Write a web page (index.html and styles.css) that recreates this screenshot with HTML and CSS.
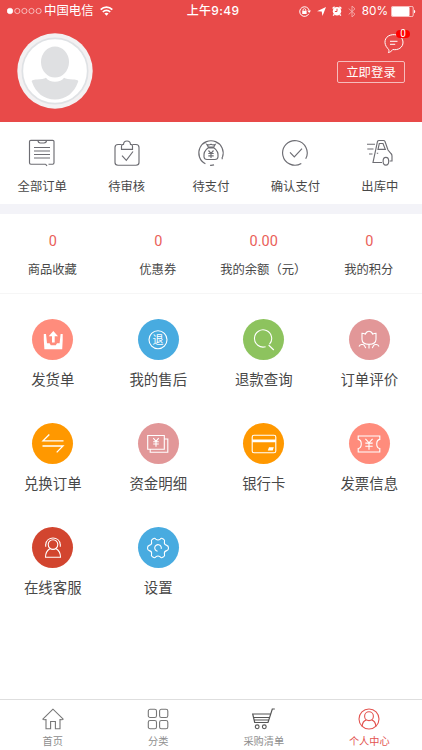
FILE: index.html
```html
<!DOCTYPE html>
<html lang="zh-CN">
<head>
    <meta charset="UTF-8">
    <meta name="viewport" content="width=device-width, initial-scale=1.0">
    <title>个人中心</title>
    <link rel="stylesheet" href="styles.css">
</head>
<body>
    <header class="header">
        <div class="status-bar">
            <div class="status-left">
                <svg width="36" height="8" viewBox="0 0 36 8" fill="none" stroke="#fff" stroke-width=".6">
                    <circle cx="3" cy="4" r="2.8" fill="#fff"/>
                    <circle cx="10.3" cy="4" r="2.6"/>
                    <circle cx="17.4" cy="4" r="2.6"/>
                    <circle cx="24.5" cy="4" r="2.6"/>
                    <circle cx="31.6" cy="4" r="2.6"/>
                </svg>
                <span class="carrier">中国电信</span>
                <svg width="13" height="10" viewBox="0 0 13 10" fill="none" stroke="#fff" stroke-width="1.7">
                    <path d="M.7 3.6C4 .2 9 .2 12.3 3.6M2.8 6C5 3.8 8 3.8 10.2 6"/>
                    <path d="M4.4 7.5C5.6 6.5 7.4 6.5 8.6 7.5L6.5 9.7Z" fill="#fff" stroke="none"/>
                </svg>
            </div>
            <div class="status-time">上午9:49</div>
            <div class="status-right">
                <svg class="status-lock" width="12" height="11" viewBox="0 0 12 11" fill="none" stroke="#fff">
                    <path d="M9.8 7.8A4.8 4.8 0 1 1 10.2 4.4"/>
                    <path d="M8.3 4.6H12L10.2 7Z" fill="#fff" stroke="none"/>
                    <rect x="3.2" y="4.8" width="4.4" height="3.2" fill="#fff" stroke="none"/>
                    <path d="M4 5V4C4 2.2 6.8 2.2 6.8 4V5" stroke-width=".8"/>
                </svg>
                <svg class="status-location" width="9" height="9" viewBox="0 0 9 9">
                    <path d="M9 0L5.5 9L4.7 4.5L0 4.3Z" fill="#fff"/>
                </svg>
                <svg class="status-alarm" width="10" height="10" viewBox="0 0 10 10">
                    <circle cx="5" cy="5.3" r="4.2" fill="#fff"/>
                    <path d="M.6 2.6L2.6.8M9.4 2.6L7.4.8M2 8.5L1.2 9.6M8 8.5L8.8 9.6" stroke="#fff" stroke-width="1.4"/>
                    <path d="M5 2.7V5.5H2.9" fill="none" stroke="#e84a49"/>
                </svg>
                <svg class="status-bluetooth" width="8" height="13" viewBox="0 0 8 13" fill="none" stroke="#fff" stroke-width=".9" opacity=".55">
                    <path d="M.7 3.6L7 9.2L4 12V1L7 3.8L.7 9.4"/>
                </svg>
                <span class="battery-text">80%</span>
                <svg width="25" height="11" viewBox="0 0 25 11">
                    <rect x=".4" y=".4" width="21.8" height="10.2" rx="1.4" fill="none" stroke="#fff" stroke-width=".7"/>
                    <rect x="1" y="1" width="17.5" height="9" rx=".7" fill="#fff"/>
                    <path d="M23 3.7C24.7 4.2 24.7 6.8 23 7.3Z" fill="#fff"/>
                </svg>
            </div>
        </div>
        <div class="profile">
            <svg class="avatar" width="76" height="76" viewBox="0 0 76 76">
                <circle cx="38" cy="38" r="37.7" fill="#f3f1f2"/>
                <circle cx="38" cy="38" r="32.7" fill="#fff" stroke="#dfe2e5" stroke-width="1.7"/>
                <ellipse cx="38" cy="29" rx="14" ry="15.5" fill="#dfe0e2"/>
                <path d="M15 49C14 47.5 16 46.5 20 46.5C24 46.5 27 46 29 44.8C32 50 44 50 47 44.8C49 46 52 46.5 56 46.5C60 46.5 62 47.5 61 49C57 60 49 66.5 38 66.5C27 66.5 19 60 15 49Z" fill="#dfe0e2"/>
            </svg>
            <div class="profile-actions">
                <div class="message">
                    <svg width="20" height="20" viewBox="0 0 20 20" fill="none" stroke="#fff" stroke-width="1">
                        <path d="M3.6 14.3C-.8 9.5.5 3 6.2 1.2C12-.7 18.7 2.2 19 8C19.2 13.6 14 16.5 8.8 15.5C7.5 17.2 6.2 18.2 4.4 18.6C5.2 17.2 5.3 15.6 3.6 14.3Z"/>
                        <path d="M6 7.3H13.5M6 10.3H11.2"/>
                    </svg>
                    <span class="badge">0</span>
                </div>
                <a class="login-btn">立即登录</a>
            </div>
        </div>
    </header>

    <nav class="orders">
        <a class="order-item">
            <svg viewBox="0 0 28 28">
                <path d="M10 1.3H2.8Q1.5 1.3 1.5 2.6V23.8Q1.5 25.2 2.8 25.2H17.5M20.5 25.2H24.7Q26 25.2 26 23.8V2.6Q26 1.3 24.7 1.3H18.5M18.5 1.3Q18.5 4 16 4H12.3Q10 4 10 1.3ZM17.5 25.2L19 27"/>
                <path d="M6 8.5H22M6 12H22M6 15.5H22M6 19H22"/>
            </svg>
            <span>全部订单</span>
        </a>
        <a class="order-item">
            <svg viewBox="0 0 28 28">
                <path d="M8.5 5.5H5Q2 5.5 2 8.5V23.5Q2 26.2 5 26.2H23Q26 26.2 26 23.5V8.5Q26 5.5 23 5.5H19.5"/>
                <path d="M8.5 10.3V7Q8.5 5.4 10.5 5.4C10.7.8 17.3.8 17.5 5.4Q19.5 5.4 19.5 7V10.3Z"/>
                <path d="M9 16.7L13.3 21.4L20 12.5"/>
            </svg>
            <span>待审核</span>
        </a>
        <a class="order-item">
            <svg viewBox="0 0 28 28">
                <path d="M8.4 24.8A12.2 12.2 0 1 1 25.5 18M25.2 18V20.2M13 26.3Q15 26.5 17 25.9"/>
                <path d="M11.3 8L9.8 5.4Q11.8 6.4 14 5.2Q16 6.4 18.2 5.4L16.8 8ZM11.3 8.8C8.2 11 6.5 14.5 7 18Q7.3 20.5 10 20.5H18Q20.7 20.5 21 18C21.5 14.5 19.9 11 16.8 8.8Z"/>
                <path d="M11.5 11.5L14 14.3L16.5 11.5M14 14.3V19M11.3 14.5H16.7M11.3 16.8H16.7"/>
            </svg>
            <span>待支付</span>
        </a>
        <a class="order-item">
            <svg viewBox="0 0 28 28">
                <path d="M20.3 24.4A12.3 12.3 0 1 1 24.7 19.8"/>
                <path d="M9 13.4L13.3 17.8L21 9.6"/>
            </svg>
            <span>确认支付</span>
        </a>
        <a class="order-item">
            <svg viewBox="0 0 28 28">
                <path d="M1 5.2H9M1.3 10H7.5M3 15H6.5"/>
                <path d="M16 23.5H7L11.5 2.5Q11.8 1.5 13 1.5H17.5Q18.5 1.5 19 2.5L22 11L25 14.5Q26 15.5 26 17V22H23.7"/>
                <path d="M13.3 4.5H17L19.3 10.3H12ZM10.8 14.2H12.2"/>
                <ellipse cx="19.9" cy="22.2" rx="2.8" ry="3.9"/>
            </svg>
            <span>出库中</span>
        </a>
    </nav>

    <section class="stats">
        <div class="stat"><b>0</b><span>商品收藏</span></div>
        <div class="stat"><b>0</b><span>优惠券</span></div>
        <div class="stat"><b>0.00</b><span>我的余额（元）</span></div>
        <div class="stat"><b>0</b><span>我的积分</span></div>
    </section>

    <main class="menu">
        <a class="menu-item">
            <div class="circle coral">
                <svg viewBox="0 0 26 26">
                    <path class="solid" d="M3.8 7H6L7 16.2H9.6L10.8 18.2H15.8L17 16.2H19.6L20.6 7H22.7V13L22.2 22.2H4.4L3.8 13ZM12 15.5V9.2H8.7L13.3 4L18 9.2H14.7V15.5Z"/>
                </svg>
            </div>
            <span>发货单</span>
        </a>
        <a class="menu-item">
            <div class="circle blue">
                <svg viewBox="0 0 26 26">
                    <circle cx="13" cy="12.7" r="9"/>
                    <text class="refund-char" x="13" y="16.8">退</text>
                </svg>
            </div>
            <span>我的售后</span>
        </a>
        <a class="menu-item">
            <div class="circle green">
                <svg viewBox="0 0 26 26">
                    <path d="M14.6 19.7A8.6 8.6 0 1 1 18.5 17.2M17.6 18L22.8 23"/>
                </svg>
            </div>
            <span>退款查询</span>
        </a>
        <a class="menu-item">
            <div class="circle rose">
                <svg viewBox="0 0 26 26">
                    <path d="M6 6.2Q8 6.2 9.2 7.2Q10.6 4.2 13 4.2Q15.4 4.2 16.8 7.2Q18 6.2 20 6.2V12.3Q20 17.2 13 17.4Q6 17.2 6 12.3ZM13 17.5V21.5"/>
                    <path d="M3 19.5C4 17.3 7 17 8.2 18.2Q9.2 19.6 9.7 21.2M23 19.5C22 17.3 19 17 17.8 18.2Q16.8 19.6 16.3 21.2"/>
                </svg>
            </div>
            <span>订单评价</span>
        </a>
        <a class="menu-item">
            <div class="circle orange">
                <svg viewBox="0 0 26 26">
                    <path d="M9.3 3.5L3 9.9H23.5M2.5 15H23L16.7 21.4" stroke-width="1.3"/>
                </svg>
            </div>
            <span>兑换订单</span>
        </a>
        <a class="menu-item">
            <div class="circle rose">
                <svg viewBox="0 0 26 26">
                    <path d="M2.7 4.5H19.3V18.2H2.7ZM19.3 8H22.8V21.2H5.2V18.2"/>
                    <path d="M8.3 7.2L11 10.4L13.7 7.2M11 10.4V15.7M8.2 10.7H13.8M8.2 13H13.8"/>
                </svg>
            </div>
            <span>资金明细</span>
        </a>
        <a class="menu-item">
            <div class="circle orange">
                <svg viewBox="0 0 26 26">
                    <rect x="1.2" y="4.2" width="23.6" height="17.6" rx="1.8"/>
                    <path class="solid" d="M1.2 8.4H24.8V11.2H1.2ZM18 16.2H22.8L21.7 19.5H16.8Z"/>
                </svg>
            </div>
            <span>银行卡</span>
        </a>
        <a class="menu-item">
            <div class="circle coral">
                <svg viewBox="0 0 26 26">
                    <path d="M2.2 5H23.8V8.4C19.7 9 19.7 16.8 23.8 17.5V21H2.2V17.5C6.3 16.8 6.3 9 2.2 8.4Z"/>
                    <path d="M9.4 7.8L13 11.8L16.6 7.8M13 11.8V18.7M9.3 12.1H16.7M9.3 15.2H16.7"/>
                </svg>
            </div>
            <span>发票信息</span>
        </a>
        <a class="menu-item">
            <div class="circle red">
                <svg viewBox="0 0 26 26">
                    <circle cx="13" cy="9.6" r="4.8"/>
                    <path d="M5.8 9.5C6.3.8 19.7.8 20.2 9.5M5.7 9V11.7M20.3 9V11.7M9.8 13.7Q5.5 16.2 5.5 22.3H20.5Q20.5 16.2 16.2 13.7"/>
                </svg>
            </div>
            <span>在线客服</span>
        </a>
        <a class="menu-item">
            <div class="circle blue">
                <svg viewBox="0 0 26 26">
                    <path d="M8.2 3.8Q9.4 2.5 10.8 4.1Q13 6 15.2 4.1Q16.6 2.5 17.8 3.8L19 4.6Q20 5.4 19.4 7.2Q19 9.8 21.7 10.4Q23.5 10.8 23.5 13Q23.5 15.2 21.7 15.6Q19 16.2 19.4 18.8Q20 20.6 19 21.4L17.8 22.2Q16.6 23.5 15.2 21.9Q13 20 10.8 21.9Q9.4 23.5 8.2 22.2L7 21.4Q6 20.6 6.6 18.8Q7 16.2 4.3 15.6Q2.5 15.2 2.5 13Q2.5 10.8 4.3 10.4Q7 9.8 6.6 7.2Q6 5.4 7 4.6Z"/>
                    <path d="M12.6 16.2A3.3 3.3 0 1 1 16.2 13.8"/>
                </svg>
            </div>
            <span>设置</span>
        </a>
    </main>

    <footer class="tab-bar">
        <a class="tab">
            <svg viewBox="0 0 24 24">
                <path d="M12 2.2L1.8 12.2Q2 12.9 5 12.6V21.7H9.6V14.5H14.4V21.7H19V12.6Q22 12.9 22.2 12.2Z"/>
            </svg>
            <span>首页</span>
        </a>
        <a class="tab">
            <svg viewBox="0 0 24 24">
                <rect x="2.3" y="2.3" width="8.2" height="8.2" rx="1.8"/>
                <rect x="13.6" y="2.3" width="8.2" height="8.2" rx="1.8"/>
                <rect x="2.3" y="13.5" width="8.2" height="8.2" rx="1.8"/>
                <rect x="13.6" y="13.5" width="8.2" height="8.2" rx="1.8"/>
            </svg>
            <span>分类</span>
        </a>
        <a class="tab">
            <svg class="cart" viewBox="0 0 24 24">
                <path d="M22.8 2H20.3L16 15.5H2.7L.7 7H18.5M1.7 10.5H17.3M2.4 13H16.5" stroke-width="1.2"/>
                <circle cx="5.2" cy="19.8" r="1.9"/>
                <circle cx="12.3" cy="19.8" r="1.9"/>
            </svg>
            <span>采购清单</span>
        </a>
        <a class="tab active">
            <svg viewBox="0 0 24 24">
                <circle cx="12" cy="12" r="10"/>
                <circle cx="12" cy="9.2" r="4.4"/>
                <path d="M5.2 19.2Q5.5 14 9.5 12.9M18.8 19.2Q18.5 14 14.5 12.9"/>
            </svg>
            <span>个人中心</span>
        </a>
    </footer>
</body>
</html>
```
FILE: styles.css
```css
* {
    box-sizing: border-box;
}

body {
    margin: 0;
    height: 750px;
    display: flex;
    flex-direction: column;
    background-color: #fff;
    color: #484848;
    font-family: Roboto, "Noto Sans CJK SC", sans-serif;
    overflow: hidden;
}

svg {
    display: block;
    flex-shrink: 0;
}

/* header */
.header {
    height: 122px;
    background-color: #e84a49;
    color: #fff;
}

.status-bar {
    height: 22px;
    display: grid;
    grid-template-columns: 1fr auto 1fr;
    align-items: center;
    padding: 0 6px 0 7px;
    font-size: 12.4px;
    line-height: 22px;
}

.status-left,
.status-right {
    display: flex;
    align-items: center;
}

.carrier {
    margin: 0 6px 0 1px;
}

.status-time {
    padding-left: 3px;
    font-family: Inter, "Noto Sans CJK SC", sans-serif;
    font-weight: 500;
    font-size: 12px;
    letter-spacing: .35px;
}

.status-right {
    justify-content: flex-end;
    font-family: Inter, sans-serif;
    font-size: 11.8px;
}

.status-location {
    margin-left: 6px;
}

.status-alarm {
    margin-left: 6px;
}

.status-bluetooth {
    margin-left: 6px;
}

.battery-text {
    margin: 0 3px 0 6px;
}

.profile {
    display: flex;
    justify-content: space-between;
    padding: 11px 17px 0;
}

.profile-actions {
    display: flex;
    flex-direction: column;
    align-items: flex-end;
}

.message {
    position: relative;
    height: 28px;
    padding: 1px 1.5px 0 0;
}

.badge {
    position: absolute;
    top: -3px;
    right: -5px;
    width: 14px;
    height: 8px;
    border-radius: 4px;
    background-color: #f00;
    font-size: 10px;
    line-height: 8px;
    text-align: center;
}

.login-btn {
    width: 68px;
    height: 22px;
    border: 1px solid #f6bcbc;
    border-radius: 2px;
    font-size: 12.4px;
    line-height: 21px;
    text-align: center;
}

/* order shortcuts */
.orders {
    display: grid;
    grid-template-columns: repeat(5, 1fr);
    height: 92px;
    border-bottom: 10px solid #f3f3f8;
}

.order-item {
    display: flex;
    flex-direction: column;
    align-items: center;
    padding-top: 17px;
    font-size: 12.3px;
    line-height: 18px;
}

.order-item svg {
    width: 28px;
    height: 28px;
    margin-bottom: 11px;
    fill: none;
    stroke: #6d6d73;
    stroke-width: 1.15;
}

/* balance and points */
.stats {
    display: grid;
    grid-template-columns: repeat(4, 1fr);
    height: 80px;
    border-bottom: 1px solid #f6f6f6;
}

.stat {
    display: flex;
    flex-direction: column;
    align-items: center;
    padding-top: 18px;
    font-size: 12.3px;
    line-height: 18px;
    white-space: nowrap;
}

.stat span {
    margin-right: 1px;
}

.stat b {
    margin-bottom: 9px;
    color: #ea5f5a;
    font-size: 14.5px;
    font-weight: 400;
    line-height: 20px;
}

/* menu grid */
.menu {
    flex: 1;
    display: grid;
    grid-template-columns: repeat(4, 1fr);
    grid-auto-rows: 104px;
    padding-top: 25px;
}

.menu-item {
    display: flex;
    flex-direction: column;
    align-items: center;
    font-size: 14.4px;
    line-height: 20px;
}

.circle {
    width: 41px;
    height: 41px;
    margin-bottom: 11px;
    border-radius: 50%;
    display: flex;
    align-items: center;
    justify-content: center;
}

.circle svg {
    width: 26px;
    height: 26px;
    fill: none;
    stroke: #fff;
    stroke-width: 1.1;
}

.circle .solid {
    fill: #fff;
    stroke: none;
}

.refund-char {
    fill: #fff;
    stroke: none;
    font-size: 11px;
    text-anchor: middle;
}

.coral {
    background-color: #ff8c7c;
}

.blue {
    background-color: #48abe0;
}

.green {
    background-color: #8dc35e;
}

.rose {
    background-color: #e29798;
}

.orange {
    background-color: #ff9800;
}

.red {
    background-color: #d2452f;
}

/* bottom tabs */
.tab-bar {
    display: grid;
    grid-template-columns: repeat(4, 1fr);
    height: 51px;
    border-top: 1px solid #dedede;
}

.tab {
    display: flex;
    flex-direction: column;
    align-items: center;
    padding-top: 7px;
    color: #8e8e8e;
    font-size: 10.2px;
    line-height: 14px;
}

.tab svg {
    width: 24px;
    height: 24px;
    margin-bottom: 4px;
    fill: none;
    stroke: #777;
    stroke-width: 1.1;
}

.tab .cart {
    stroke: #555;
}

.tab.active {
    color: #e35450;
}

.tab.active svg {
    stroke: #e35450;
}
```
